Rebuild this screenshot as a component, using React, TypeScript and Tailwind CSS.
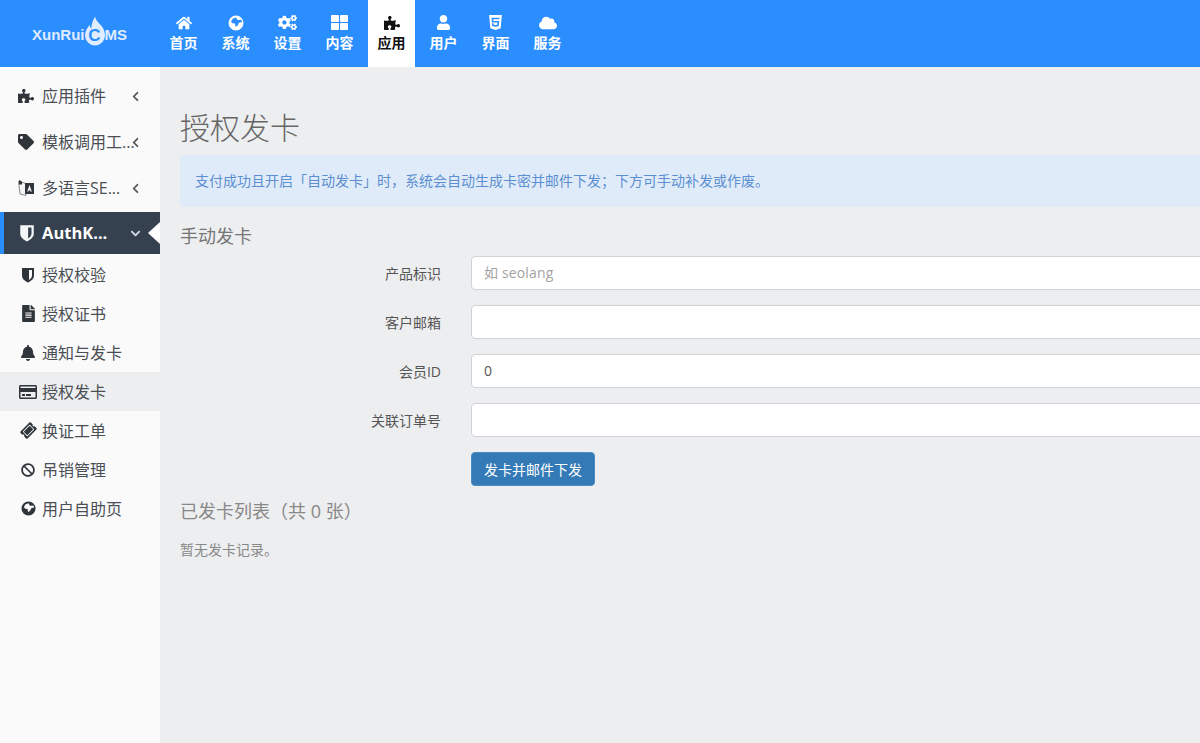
import type { ReactNode } from "react"
import {
  FaBan,
  FaBell,
  FaChevronDown,
  FaChevronLeft,
  FaCloud,
  FaCogs,
  FaFileAlt,
  FaHome,
  FaHtml5,
  FaPuzzlePiece,
  FaRegCreditCard,
  FaTag,
  FaThLarge,
  FaTicketAlt,
  FaUser,
} from "react-icons/fa"

const font = { fontFamily: '"Open Sans", "Noto Sans CJK SC", sans-serif' }

function ShieldIcon({ className }: { className?: string }) {
  return (
    <svg viewBox="0 0 16 16" className={className} fill="currentColor">
      <path
        fillRule="evenodd"
        d="M2 1h12v7.500c0 3.500-3 5.600-6 7-3-1.400-6-3.500-6-7zM9 3v9.900c1.600-1 3-2.400 3-4.400V3z"
      />
    </svg>
  )
}

function GlobeIcon({ className }: { className?: string }) {
  return (
    <svg viewBox="0 0 16 16" className={className} fill="currentColor">
      <path
        fillRule="evenodd"
        d="M8 0.500a7.500 7.500 0 1 0 0 15 7.500 7.500 0 0 0 0-15zM3 6.500l2-3 3-1 1.500 2.500 3.800-.3.700 2.300-3 .7-1.500 3-2 1-.5-3.200-2.500-.3z"
      />
    </svg>
  )
}

function LanguageIcon({ className }: { className?: string }) {
  return (
    <svg viewBox="0 0 18 18" className={className}>
      <path d="M1.500 2.500l7.500 2v12l-6-1.500z" fill="#f4f4f4" stroke="#8a8a8a" strokeWidth="1" />
      <path d="M2 1l3 1.500v3H2z" fill="#2f353b" />
      <path d="M8 4h9v11H8z" fill="#2f353b" />
      <path d="M12.500 6l2.300 6.500h-1.400l-.4-1.300h-1.100l-.4 1.300h-1.300z" fill="#f4f4f4" />
    </svg>
  )
}

const navItems = [
  { label: "首页", icon: <FaHome className="text-[16px]" /> },
  { label: "系统", icon: <GlobeIcon className="w-[16px] h-[16px]" /> },
  { label: "设置", icon: <FaCogs className="text-[19px]" /> },
  { label: "内容", icon: <FaThLarge className="text-[17px]" /> },
  { label: "应用", icon: <FaPuzzlePiece className="text-[16px]" />, active: true },
  { label: "用户", icon: <FaUser className="text-[15px]" /> },
  { label: "界面", icon: <FaHtml5 className="text-[17px]" /> },
  { label: "服务", icon: <FaCloud className="text-[18px]" /> },
]

const subItems = [
  { label: "授权校验", icon: <ShieldIcon className="w-[16px] h-[16px]" /> },
  { label: "授权证书", icon: <FaFileAlt className="text-[17px]" /> },
  { label: "通知与发卡", icon: <FaBell className="text-[16px]" /> },
  { label: "授权发卡", icon: <FaRegCreditCard className="text-[18px]" />, active: true },
  { label: "换证工单", icon: <FaTicketAlt className="text-[15px] -rotate-45" /> },
  { label: "吊销管理", icon: <FaBan className="text-[14px]" /> },
  { label: "用户自助页", icon: <GlobeIcon className="w-[15px] h-[15px]" /> },
]

function Logo() {
  return (
    <div
      className="w-[160px] flex items-center pl-[32px] pt-[4px] text-[15px] font-bold text-[#e0ecff]"
      style={{ fontFamily: '"Liberation Sans", sans-serif' }}
    >
      <span>XunRui</span>
      <span className="relative w-[20px] h-[22px]">
        <svg viewBox="0 0 22 32" className="absolute left-0 -top-[10px] w-[20px] h-[32px]">
          <path
            d="M11 0c1 4 3 6 6 9 3 3 5 7 5 12a11 11 0 0 1-22 0c0-5 3-9 5-12 0 2 1 3 2 4 0-5 2-9 4-13z"
            fill="#e0ecff"
          />
        </svg>
        <span className="absolute inset-0 top-[1px] flex items-center justify-center text-[17px] text-[#2b8eff]">C</span>
      </span>
      <span>MS</span>
    </div>
  )
}

function SideRow({ icon, label }: { icon: ReactNode; label: string }) {
  return (
    <div className="h-[46px] flex items-center pl-[17px] pr-[19px] text-[16px] text-[#4a4f55]">
      <span className="w-[18px] shrink-0 flex justify-center text-[16px] text-[#2f353b]">{icon}</span>
      <span className="ml-[7px] w-[88px] shrink-0 whitespace-nowrap">{label}</span>
      <FaChevronLeft className="ml-auto shrink-0 text-[11px] text-[#555]" />
    </div>
  )
}

function FormRow({ label, value, placeholder }: { label: string; value?: string; placeholder?: string }) {
  return (
    <div className="h-[34px] flex items-center mb-[15px]">
      <label className="w-[261px] text-right text-[14px] text-[#555]">{label}</label>
      <input
        readOnly
        value={value ?? ""}
        placeholder={placeholder}
        className="ml-[30px] flex-1 h-[34px] px-[12px] pb-[1px] text-[14px] tracking-[0.15px] text-[#555] placeholder:text-[#a3a3a3] bg-white border border-[#cfd2d6] rounded-[4px] outline-none"
      />
    </div>
  )
}

export default function App() {
  return (
    <div className="h-[743px] overflow-hidden flex flex-col bg-[#edeef0]" style={font}>
      <header className="h-[67px] shrink-0 flex bg-[#2b8eff]">
        <Logo />
        <nav className="flex gap-[5px]">
          {navItems.map((item) => (
            <div
              key={item.label}
              className={`w-[47px] h-[67px] flex flex-col items-center pt-[14px] text-[14px] font-semibold ${
                item.active ? "bg-white text-[#111]" : "text-white"
              }`}
            >
              <span className="h-[17px] flex items-center">{item.icon}</span>
              <span className="mt-[2px] leading-[20px]">{item.label}</span>
            </div>
          ))}
        </nav>
      </header>

      <div className="flex-1 flex min-h-0">
        <aside className="w-[160px] shrink-0 bg-[#fafafa] pt-[4px] border-t-[2px] border-white">
          <SideRow icon={<FaPuzzlePiece />} label="应用插件" />
          <SideRow icon={<FaTag />} label="模板调用工..." />
          <SideRow icon={<LanguageIcon className="w-[18px] h-[18px]" />} label="多语言SE..." />
          <div className="relative mt-[1px] h-[42px] flex items-center pl-[14px] pr-[19px] bg-[#364150] border-l-[4px] border-[#2b8eff] text-[16.500px] font-bold text-white">
            <ShieldIcon className="w-[18px] h-[18px] text-[#f4f6f8]" />
            <span className="ml-[6px]">AuthK...</span>
            <FaChevronDown className="ml-auto text-[11px] text-[#d5dbe2]" />
            <span className="absolute right-0 top-[10px] border-y-[11px] border-r-[12px] border-y-transparent border-r-white" />
          </div>
          <div className="pt-[1px]">
            {subItems.map((item) => (
              <div
                key={item.label}
                className={`h-[39px] flex items-center pl-[19px] text-[16px] text-[#4a4f55] ${
                  item.active ? "bg-[#edeef0]" : ""
                }`}
              >
                <span className="w-[18px] flex justify-center text-[#2f353b]">{item.icon}</span>
                <span className="ml-[5px]">{item.label}</span>
              </div>
            ))}
          </div>
        </aside>

        <main className="flex-1 overflow-hidden pl-[20px] pt-[42px]">
          <div className="w-[1100px]">
            <h1 className="text-[30px] leading-[38px] font-light text-[#666]">授权发卡</h1>
            <div className="mt-[8px] h-[52px] flex items-center px-[15px] pb-[2px] rounded-[4px] bg-[#e0ebf9] text-[14px] text-[#5b8fd1]">
              支付成功且开启「自动发卡」时，系统会自动生成卡密并邮件下发；下方可手动补发或作废。
            </div>
            <h2 className="mt-[16px] mb-[7px] text-[18px] leading-[26px] text-[#777]">手动发卡</h2>
            <FormRow label="产品标识" placeholder="如 seolang" />
            <FormRow label="客户邮箱" />
            <FormRow label="会员ID" value="0" />
            <FormRow label="关联订单号" />
            <div className="pl-[291px]">
              <button className="w-[124px] h-[34px] rounded-[4px] bg-[#337ab7] border border-[#4a8cc4] text-[14px] text-white">
                发卡并邮件下发
              </button>
            </div>
            <h2 className="mt-[11px] text-[18px] leading-[28px] text-[#888]">已发卡列表（共 0 张）</h2>
            <p className="mt-[15px] text-[14px] leading-[20px] text-[#888]">暂无发卡记录。</p>
          </div>
        </main>
      </div>
    </div>
  )
}
